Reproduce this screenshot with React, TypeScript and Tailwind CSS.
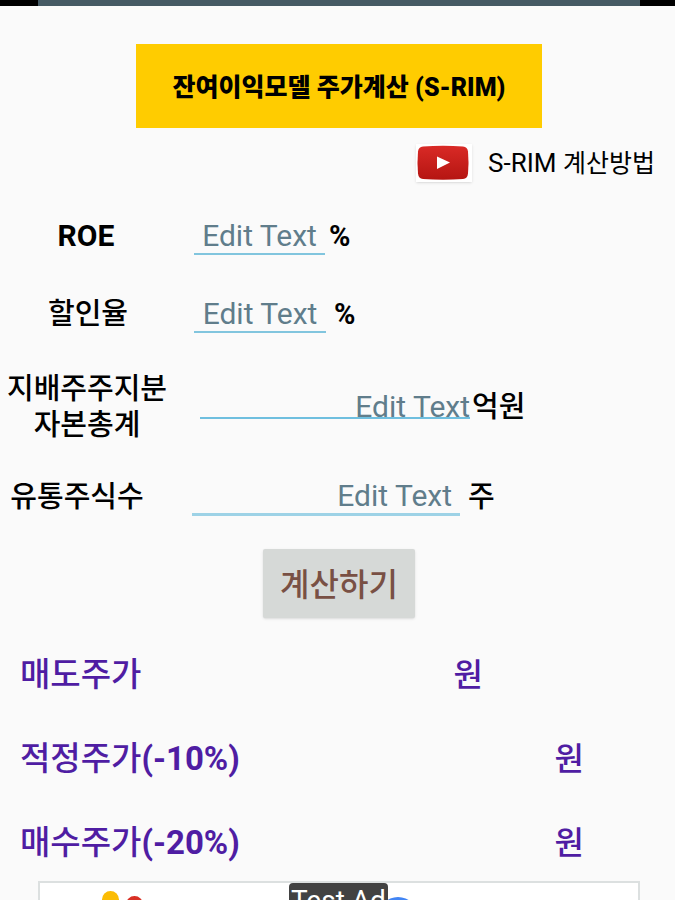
import { FormEvent, useState } from "react";
import clsx from "clsx";

const inputBase =
  "min-w-0 bg-transparent text-[30px] leading-9 text-black outline-none placeholder:text-[#607d8b] placeholder:opacity-100";

const fields = [
  {
    id: "roe",
    label: ["ROE"],
    unit: "%",
    row: "mt-9",
    labelClass: "w-[172px] text-[30px] font-bold",
    inputClass: "ml-[22px] h-[38px] w-[131px] border-b-2 border-[#81c5de] text-center",
    unitClass: "ml-1 text-[29px] font-bold",
  },
  {
    id: "discount",
    label: ["할인율"],
    unit: "%",
    row: "mt-[42px]",
    labelClass: "w-[176px] text-[29px] font-medium",
    inputClass: "ml-[18px] h-[38px] w-[132px] border-b-2 border-[#81c5de] text-center",
    unitClass: "ml-2 text-[29px] font-bold",
  },
  {
    id: "equity",
    label: ["지배주주지분", "자본총계"],
    unit: "억원",
    row: "mt-[39px]",
    labelClass: "w-[174px] text-[29px] font-medium",
    // the line sits right under the baseline here, so it is a background
    inputClass:
      "ml-[26px] h-9 w-[270px] bg-[linear-gradient(#6fbfdf,#6fbfdf)] bg-[length:100%_2px] bg-[position:0_28px] bg-no-repeat text-right",
    unitClass: "ml-0.5 text-[29px] font-medium",
  },
  {
    id: "shares",
    label: ["유통주식수"],
    unit: "주",
    row: "mt-9",
    labelClass: "w-[154px] text-[29px] font-medium",
    inputClass: "ml-[38px] h-[38px] w-[268px] border-b-3 border-[#9dd2e6] pr-2 text-right",
    unitClass: "ml-2 text-[29px] font-medium",
  },
];

const results = [
  { id: "sell", label: "매도주가", note: "", factor: 1, pad: "pr-[192px]" },
  { id: "fair", label: "적정주가", note: "(-10%)", factor: 0.9, pad: "pr-[91px]" },
  { id: "buy", label: "매수주가", note: "(-20%)", factor: 0.8, pad: "pr-[91px]" },
];

function YoutubeIcon() {
  return (
    <svg viewBox="0 0 56 38" className="h-[38px] w-14" aria-hidden="true">
      <defs>
        <linearGradient id="yt" x1="0" y1="0" x2="0" y2="1">
          <stop offset="0" stopColor="#d92a26" />
          <stop offset="1" stopColor="#b51512" />
        </linearGradient>
      </defs>
      <path
        d="M7 2.500Q27 1 47 2.500Q51.500 3 52 7.500Q53 18.500 52 29.500Q51.500 34.500 47 35Q27 36.500 7 35Q2.500 34.500 2 29.500Q1 18.500 2 7.500Q2.500 3 7 2.500Z"
        fill="url(#yt)"
      />
      <path d="M21 12.500L34 18.500L21 25Z" fill="#fff" />
    </svg>
  );
}

function AdBanner() {
  return (
    <div className="relative mr-[35px] ml-[38px] mt-3.5 h-24 shrink-0 border-2 border-[#dce0e0] bg-white">
      <svg viewBox="0 0 80 80" className="ml-14 mt-2 h-20 w-20" aria-hidden="true">
        <rect x="6" y="0" width="17" height="70" rx="8.500" fill="#fbbc04" />
        <rect x="30" y="5" width="17" height="60" rx="8.500" fill="#d93025" />
      </svg>
      <svg viewBox="0 0 40 40" className="absolute left-[338px] top-3.5 h-10 w-10" aria-hidden="true">
        <circle cx="20" cy="20" r="20" fill="#4285f4" />
      </svg>
      <span className="absolute left-[249px] top-0 rounded-t-sm bg-[#424242] px-0.5 text-[28px] leading-9 whitespace-nowrap text-white">
        Test Ad
      </span>
    </div>
  );
}

export default function App() {
  const [values, setValues] = useState<Record<string, string>>({});
  const [price, setPrice] = useState<number | null>(null);

  const handleSubmit = (event: FormEvent<HTMLFormElement>) => {
    event.preventDefault();
    const roe = Number(values.roe);
    const discount = Number(values.discount);
    const equity = Number(values.equity) * 100000000;
    const shares = Number(values.shares);
    if (!discount || !shares) return;
    setPrice((equity + (equity * (roe - discount)) / discount) / shares);
  };

  return (
    <main className="flex h-screen flex-col overflow-hidden bg-[#fafafa] font-['Roboto','Noto_Sans_CJK_KR',sans-serif] text-black">
      <div className="shrink-0 bg-black pr-[35px] pl-[38px]">
        <div className="h-1.5 bg-[#455a64]" />
      </div>

      <div className="flex justify-center pt-[38px] pr-[35px] pl-[38px]">
        <h1 className="bg-[#ffcc00] px-[37px] pt-[26px] pb-[22px] text-[25px] leading-9 font-black whitespace-nowrap">
          잔여이익모델 주가계산 (S-RIM)
        </h1>
      </div>

      <a href="#guide" className="mt-4 mr-5 flex items-center gap-4 self-end text-[25px] leading-9">
        <span className="bg-white shadow-sm">
          <YoutubeIcon />
        </span>
        <span>
          <span className="text-[26px]">S-RIM </span>계산방법
        </span>
      </a>

      <form onSubmit={handleSubmit} className="flex flex-col">
        {fields.map((field) => (
          <div key={field.id} className={clsx("flex items-center leading-9", field.row)}>
            <label htmlFor={field.id} className={clsx("shrink-0 text-center", field.labelClass)}>
              {field.label.map((line) => (
                <span key={line} className="block h-9">
                  {line}
                </span>
              ))}
            </label>
            <div className="flex h-9 items-center">
              <input
                id={field.id}
                inputMode="decimal"
                placeholder="Edit Text"
                value={values[field.id] ?? ""}
                onChange={(event) => setValues({ ...values, [field.id]: event.target.value })}
                className={clsx(inputBase, field.inputClass)}
              />
              <span className={clsx("whitespace-nowrap", field.unitClass)}>{field.unit}</span>
            </div>
          </div>
        ))}

        <div className="flex justify-center pt-[34px] pr-[35px] pl-[38px]">
          <button
            type="submit"
            className="rounded-xs bg-[#d6d9d7] px-[17px] pt-[18px] pb-[15px] text-[32px] leading-9 font-medium text-[#795044] shadow-sm"
          >
            계산하기
          </button>
        </div>
      </form>

      <section className="mt-[33px] flex flex-col gap-9 text-[33px] leading-[48px] font-medium text-[#4f1da3]">
        {results.map((result) => (
          <div key={result.id} className={clsx("flex h-12 justify-between pl-5", result.pad)}>
            <span>
              {result.label}
              <span className="font-bold">{result.note}</span>
            </span>
            <span className="text-[32px]">
              <output>{price === null ? "" : Math.round(price * result.factor).toLocaleString()}</output>원
            </span>
          </div>
        ))}
      </section>

      <AdBanner />
    </main>
  );
}
